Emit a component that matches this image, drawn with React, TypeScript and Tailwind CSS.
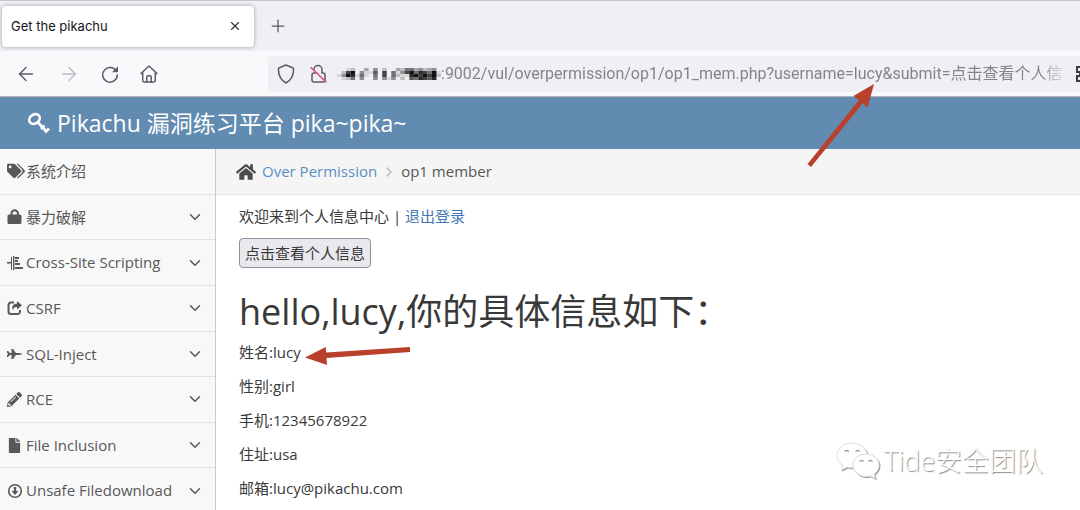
import { ReactNode } from 'react';
import { FaTags, FaPencilAlt, FaFile, FaHome } from 'react-icons/fa';
import { ChevronDown, ChevronRight, Plus, X, ArrowLeft, ArrowRight } from 'lucide-react';

type MenuItem = { label: string; icon: ReactNode; leaf?: boolean };

const menu: MenuItem[] = [
  { label: '系统介绍', icon: <FaTags className="size-[18px]" />, leaf: true },
  { label: '暴力破解', icon: <LockIcon /> },
  { label: 'Cross-Site Scripting', icon: <AlignIcon /> },
  { label: 'CSRF', icon: <ShareIcon /> },
  { label: 'SQL-Inject', icon: <JetIcon /> },
  { label: 'RCE', icon: <FaPencilAlt className="size-[15px]" /> },
  { label: 'File Inclusion', icon: <FaFile className="size-[15px]" /> },
  { label: 'Unsafe Filedownload', icon: <DownIcon /> },
];

const profile = [
  ['姓名', 'lucy'],
  ['性别', 'girl'],
  ['手机', '12345678922'],
  ['住址', 'usa'],
  ['邮箱', 'lucy@pikachu.com'],
];

// darkness of each block of the censored host, 0 = blank, 9 = black
const censored = [
  '00120030402003255342340',
  '02790411607051479587591',
  '14981510507052118979792',
  '01250400404140206587680',
];

function LockIcon() {
  return (
    <svg viewBox="0 0 16 16" className="size-4">
      <path d="M4.500 8V4.500a3.200 3.200 0 0 1 6.400 0V8" fill="none" stroke="currentColor" strokeWidth="2" />
      <rect x=".5" y="5.500" width="14" height="9.500" rx="1.500" fill="currentColor" />
    </svg>
  );
}

function AlignIcon() {
  return (
    <svg viewBox="0 0 16 16" className="size-4" fill="currentColor">
      <path d="M0 7h4v1.500H0zM4 2h1v13H4zM6 1h1.400v14H6zM8 2h4v2H8zM8 5h3v2H8zM8 8h5v2H8zM8 12h8v2H8z" />
    </svg>
  );
}

function ShareIcon() {
  return (
    <svg viewBox="0 0 16 16" className="size-4" fill="none">
      <path d="M7 2.500H4A2.500 2.500 0 0 0 1.500 5v6.500A2.500 2.500 0 0 0 4 14h6.500a2.500 2.500 0 0 0 2.500-2.500V10" stroke="currentColor" strokeWidth="2" />
      <path d="M10 1l5 4.200-5 4.200V7C7.500 7 6.200 8 6 10.500 4 6.500 6.500 3.500 10 3.500z" fill="currentColor" />
    </svg>
  );
}

function JetIcon() {
  return (
    <svg viewBox="0 0 16 16" className="size-4" fill="currentColor">
      <path d="M0 5h1l2 2h1.500V4h-.7v-.7H7V4h-.4L9 7h3l4 1-4 1H9l-2.400 3H7v.7H3.800V12h.7V9H3l-2 2H0V9h1V8.500H.4v-1H1V7H0z" />
    </svg>
  );
}

function DownIcon() {
  return (
    <svg viewBox="0 0 16 16" className="size-4" fill="none">
      <circle cx="8" cy="8" r="6.300" stroke="currentColor" strokeWidth="1.600" />
      <path d="M6.800 4h2.400v4h2.300L8 12 4.500 8h2.300z" fill="currentColor" />
    </svg>
  );
}

function ReloadIcon() {
  return (
    <svg viewBox="0 0 18 18" className="size-[18px]" fill="none">
      <path d="M15.500 6.500A7.300 7.300 0 1 0 16.300 10" stroke="currentColor" strokeWidth="1.500" strokeLinecap="round" />
      <path d="M17 1.200v5.300a.7.700 0 0 1-.7.700H11z" fill="currentColor" />
    </svg>
  );
}

function HomeIcon() {
  return (
    <svg viewBox="0 0 18 18" className="size-[18px]" fill="none" stroke="currentColor" strokeWidth="1.500" strokeLinejoin="round" strokeLinecap="round">
      <path d="M1 8.500L9 1l8 7.500M2.700 7.500V15.500a1.500 1.500 0 0 0 1.500 1.500h9.600a1.500 1.500 0 0 0 1.500-1.500V7.500" />
      <path d="M6.800 17v-5a1.200 1.200 0 0 1 1.200-1.200h2a1.200 1.200 0 0 1 1.200 1.200v5" />
    </svg>
  );
}

function ShieldIcon() {
  return (
    <svg viewBox="0 0 18 20" className="h-5 w-[18px]" fill="none" stroke="#5b5b66" strokeWidth="1.500" strokeLinejoin="round">
      <path d="M9 1l6.600 2.800a1.600 1.600 0 0 1 1 1.500C16.600 11.500 14.500 16 9 19 3.500 16 1.400 11.500 1.400 5.300a1.600 1.600 0 0 1 1-1.500z" />
    </svg>
  );
}

function BrokenLockIcon() {
  return (
    <svg viewBox="0 0 18 20" className="h-5 w-[18px]" fill="none" strokeWidth="1.500" strokeLinecap="round">
      <path d="M5 5.500a4 4 0 0 1 8 0V9h1a2 2 0 0 1 2 2v5.500M15 18H5a2 2 0 0 1-2-2v-5a2 2 0 0 1 2-2h2" stroke="#5b5b66" />
      <path d="M2 3.500L17 18" stroke="#e0466a" />
    </svg>
  );
}

function KeyIcon() {
  return (
    <svg viewBox="0 0 24 22" className="h-[22px] w-6" fill="none" stroke="currentColor">
      <ellipse cx="7.500" cy="7" rx="5.600" ry="4.500" strokeWidth="2.600" transform="rotate(-35 7.500 7)" />
      <path d="M11 10.500L18.500 18.500M14 17l3.500-3.500M18 20.500l4-4" strokeWidth="2.600" />
    </svg>
  );
}

function QrIcon() {
  return (
    <svg viewBox="0 0 16 16" className="size-4 shrink-0" fill="none" stroke="#3a3a44" strokeWidth="2">
      <path d="M1 1h5v5H1zM10 1h5v5h-5zM1 10h5v5H1zM10 10h2v2M14 10v5M3 8h10" />
    </svg>
  );
}

function Censored() {
  return (
    <svg viewBox="0 0 92 16" preserveAspectRatio="none" className="h-3 w-[104px] shrink-0">
      {censored.flatMap((row, y) =>
        [...row].map((v, x) => (
          <rect key={`${x}-${y}`} x={x * 4} y={y * 4} width="4" height="4" fill="#111" opacity={Number(v) / 9} />
        ))
      )}
    </svg>
  );
}

function WechatMark() {
  return (
    <svg viewBox="0 0 44 38" className="h-[38px] w-11 drop-shadow-[1px_1px_0px_#999]" fill="#fff" stroke="#ddd" strokeWidth="1">
      <path d="M16 1C7.500 1 1 6.500 1 13.500c0 4 2 7.500 5.500 9.800L5.500 28l5.500-3c1.600.5 3.200.8 5 .8 8.500 0 15-5.500 15-12.300S24.500 1 16 1z" />
      <path d="M30 12c-7.500 0-13 5-13 11s5.500 11.500 13 11.500c1.500 0 3-.2 4.300-.6l5 2.600-1.300-4.300c3-2 5-5.200 5-9 0-6.200-5.500-11.200-13-11.200z" />
      <path d="M9 10a1.700 1.700 0 0 1 3.400 0M20 10a1.700 1.700 0 0 1 3.400 0M24 20a1.600 1.600 0 0 1 3.200 0M33 20a1.600 1.600 0 0 1 3.200 0" stroke="#999" strokeWidth="1.200" />
    </svg>
  );
}

function BrowserBar() {
  return (
    <div className="font-['Inter',sans-serif]">
      <div className="flex h-[51px] items-center border-t border-[#c4c3c8] bg-[#f0eff4] px-0.5">
        <div className="flex h-[41px] w-[252px] items-center justify-between rounded bg-white pr-3 pl-[9px] text-[13px] text-[#15141a] shadow-[0_0_4px_rgba(0,0,0,0.35)]">
          <span className="pt-0.5">Get the pikachu</span>
          <button aria-label="Close tab"><X className="size-[14px] text-[#33323a]" strokeWidth={2} /></button>
        </div>
        <button aria-label="New tab" className="ml-[14px]"><Plus className="size-5 text-[#5b5b66]" strokeWidth={1.5} /></button>
      </div>
      <div className="flex h-[46px] items-center border-b border-[#b5b4ba] bg-[#f9f9fb] text-[#5b5b66]">
        <div className="flex w-[268px] shrink-0 items-center gap-[21px] pl-[15px]">
          <button aria-label="Back"><ArrowLeft className="size-[22px]" strokeWidth={1.5} /></button>
          <button aria-label="Forward" disabled><ArrowRight className="size-[22px] text-[#bcbcc2]" strokeWidth={1.5} /></button>
          <button aria-label="Reload"><ReloadIcon /></button>
          <button aria-label="Home"><HomeIcon /></button>
        </div>
        <div className="flex h-9 min-w-0 flex-1 items-center rounded-l bg-[#f0eff4] pl-[9px]">
          <ShieldIcon />
          <span className="ml-[14px]"><BrokenLockIcon /></span>
          <span className="ml-2.5"><Censored /></span>
          <input
            aria-label="Address"
            readOnly
            className="min-w-0 flex-1 bg-transparent font-['Roboto','Noto_Sans_CJK_SC',sans-serif] text-[16px] text-[#85848a] outline-none [mask-image:linear-gradient(to_left,transparent,black_24px)]"
            value=":9002/vul/overpermission/op1/op1_mem.php?username=lucy&submit=点击查看个人信息"
          />
          <div className="ml-2.5 w-1 overflow-hidden"><QrIcon /></div>
        </div>
      </div>
    </div>
  );
}

function Sidebar() {
  return (
    <nav className="w-[216px] shrink-0 border-r border-[#cccccc] bg-[#f8f8f8]">
      <ul className="grid h-[365px] auto-rows-fr">
        {menu.map((item) => (
          <li key={item.label} className="border-b border-[#e3e3e3]">
            <a href="#" className="flex h-full items-center pr-[11px] pl-[7px] text-[15px] text-[#585858]">
              <span className="flex w-[19px] shrink-0 items-center">{item.icon}</span>
              <span className="flex-1">{item.label}</span>
              {!item.leaf && <ChevronDown className="size-[18px]" strokeWidth={2} />}
            </a>
          </li>
        ))}
      </ul>
    </nav>
  );
}

export default function App() {
  return (
    <div className="relative flex h-screen flex-col overflow-hidden bg-white font-['Open_Sans','Noto_Sans_CJK_SC',sans-serif] text-[15px] text-[#393939]">
      <BrowserBar />
      <header className="flex h-[52px] shrink-0 items-center gap-1.5 bg-[#618bb1] pl-[27px] text-[23px] text-white">
        <KeyIcon />
        Pikachu 漏洞练习平台 pika~pika~
      </header>
      <div className="flex flex-1 items-start">
        <Sidebar />
        <main className="min-w-0 flex-1">
          <div className="flex h-[46px] items-center border-b border-[#e5e5e5] bg-[#f5f5f5] pl-5 text-[#555]">
            <FaHome className="size-5 text-[#4c4c4c]" />
            <a href="#" className="ml-1.5 text-[#5b8fc4]">Over Permission</a>
            <ChevronRight className="mx-1 size-4 text-[#b2b6bf]" strokeWidth={2} />
            <span>op1 member</span>
          </div>
          <div className="pt-[9px] pl-[23px]">
            <p className="leading-6">
              欢迎来到个人信息中心 | <a href="#" className="text-[#4477b5]">退出登录</a>
            </p>
            <button className="mt-2.5 h-[30px] rounded border border-[#8f8f9d] bg-[#e9e9ed] px-[5px]">点击查看个人信息</button>
            <h1 className="mt-4 text-[36px] leading-[56px]">hello,lucy,你的具体信息如下：</h1>
            {profile.map(([label, value], i) => (
              <p key={label} className="relative mb-2.5 leading-6">
                {label}:{value}
                {i === 0 && (
                  <svg viewBox="0 0 108 22" className="absolute top-1 left-[66px] h-[22px] w-[108px]" fill="#b9402b">
                    <path d="M0 13.500L20.700 3l.5 5.500L105 3v5L21.500 14l.5 7z" />
                  </svg>
                )}
              </p>
            ))}
          </div>
        </main>
      </div>
      <svg viewBox="0 0 68 84" className="absolute top-[83px] left-[807px] h-[84px] w-[68px]" fill="#b9402b">
        <path d="M67 1L60.500 24.500l-4.700-4.200L4 84 .5 81 52 17l-5.600-4z" />
      </svg>
      <div className="absolute right-[37px] bottom-[29px] flex items-center gap-1 text-[27px] font-light text-white [text-shadow:1px_1px_1px_#888]">
        <WechatMark />
        Tide安全团队
      </div>
    </div>
  );
}
